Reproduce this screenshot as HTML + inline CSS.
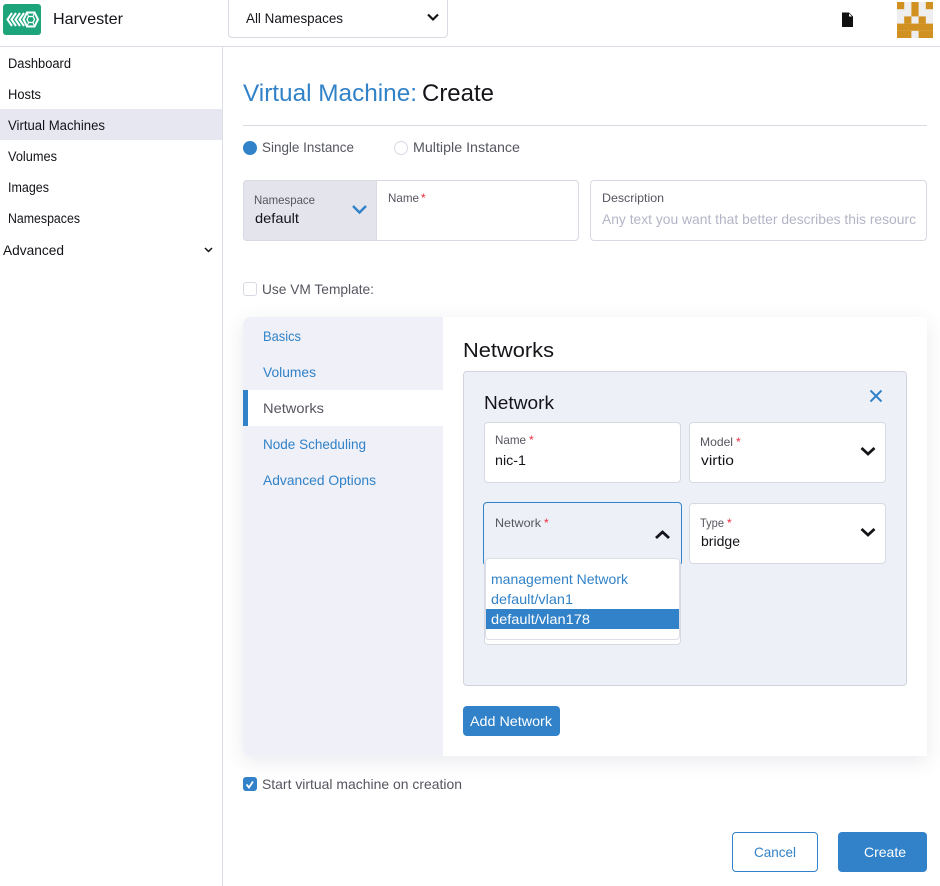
<!DOCTYPE html>
<html><head><meta charset="utf-8"><title>Harvester</title>
<style>
html,body{margin:0;padding:0;background:#fff}
#p{position:relative;width:940px;height:886px;overflow:hidden;background:#fff}
#p div{position:absolute;box-sizing:border-box}
.b{background:#fff;border:1px solid #d8dae3;border-radius:4px}
svg{position:absolute;left:0;top:0}
text{font-family:"Liberation Sans",sans-serif;font-size:14px;fill:#141419}
.g{fill:#55565f}.l{fill:#3182c8}.s{font-size:12px;fill:#55565f}.r{fill:#ee2b3b;font-size:12px}
</style></head><body><div id="p">
<div style="left:0;top:46px;width:940px;height:1px;background:#dcdee7"></div>
<div style="left:222px;top:47px;width:1px;height:839px;background:#dcdee7"></div>
<div style="left:0;top:109px;width:222px;height:31px;background:#e6e7f0"></div>
<div class="b" style="left:228px;top:-4px;width:220px;height:42px"></div>
<div style="left:3px;top:4px;width:38px;height:31px;background:#1ea47b;border-radius:3px"></div>
<div style="left:243px;top:125px;width:684px;height:1px;background:#d8dae3"></div>
<div style="left:243px;top:141px;width:14px;height:14px;border-radius:50%;background:#3182c8"></div>
<div style="left:394px;top:141px;width:14px;height:14px;border-radius:50%;border:1px solid #d8dae3"></div>
<div class="b" style="left:243px;top:180px;width:336px;height:61px"></div>
<div style="left:243px;top:180px;width:134px;height:61px;background:#e3e4ec;border:1px solid #d8dae3;border-radius:4px 0 0 4px"></div>
<div class="b" style="left:590px;top:180px;width:337px;height:61px"></div>
<div class="b" style="left:243px;top:282px;width:14px;height:14px;border-radius:3px"></div>
<div style="left:243px;top:317px;width:684px;height:439px;background:#fff;border-radius:8px 0 0 8px;box-shadow:0 5px 20px rgba(40,45,80,.1)"></div>
<div style="left:243px;top:317px;width:200px;height:439px;background:#eff0f8;border-radius:8px 0 0 8px"></div>
<div style="left:243px;top:390px;width:200px;height:36px;background:#fff"></div>
<div style="left:243px;top:390px;width:5px;height:36px;background:#3182c8"></div>
<div style="left:463px;top:371px;width:444px;height:315px;background:#eef0f8;border:1px solid #d2d4dd;border-radius:4px"></div>
<div class="b" style="left:484px;top:422px;width:197px;height:61px"></div>
<div class="b" style="left:689px;top:422px;width:197px;height:61px"></div>
<div class="b" style="left:689px;top:503px;width:197px;height:61px"></div>
<div style="left:483px;top:502px;width:199px;height:64px;background:#eef0f8;border:1px solid #3182c8;border-radius:4px"></div>
<div class="b" style="left:484px;top:560px;width:197px;height:85px"></div>
<div class="b" style="left:485px;top:558px;width:195px;height:82px;border-color:#dcdee7"></div>
<div style="left:486px;top:609px;width:193px;height:20px;background:#3182c8"></div>
<div style="left:463px;top:706px;width:97px;height:30px;background:#3182c8;border-radius:4px"></div>
<div style="left:243px;top:777px;width:14px;height:14px;background:#3182c8;border-radius:3px"></div>
<div style="left:732px;top:832px;width:86px;height:40px;background:#fff;border:1px solid #3182c8;border-radius:4px"></div>
<div style="left:838px;top:832px;width:89px;height:40px;background:#3182c8;border-radius:4px"></div>
<svg width="940" height="886" viewBox="0 0 940 886">
<g fill="none" stroke="#fff" stroke-width="2">
<path d="M12 13l-4.500 6.500 4.500 6.500M16 13l-4.500 6.500 4.500 6.500M20 13l-4.500 6.500 4.500 6.500M24 13l-4.500 6.500 4.500 6.500"/>
<path d="M27 12.500h7.500l3.500 7-3.500 7h-7.500l-3.500-7z"/><path d="M28.500 16.500h4.500l1.500 3-1.500 3h-4.500l-1.500-3z" stroke-width="1.300"/>
<path d="M27 12.500l1.500 4M34.500 12.500l-1.500 4M27 26.500l1.500-4M34.500 26.500l-1.500-4" stroke-width="1"/>
</g>
<rect x="897" y="2" width="36" height="36" fill="#eeeeee"/>
<g fill="#d09120">
<rect x="897" y="2" width="7.200" height="7.200"/><rect x="911.400" y="2" width="7.200" height="14.400"/><rect x="925.800" y="2" width="7.200" height="7.200"/>
<rect x="904.200" y="16.400" width="7.200" height="7.200"/><rect x="918.600" y="16.400" width="7.200" height="7.200"/>
<rect x="897" y="23.600" width="36" height="7.200"/><rect x="897" y="30.800" width="14.400" height="7.200"/><rect x="918.600" y="30.800" width="14.400" height="7.200"/>
</g>
<path d="M842 12.500h7l4 4v10.500h-11z" fill="#111"/><path d="M849 13.500l3 3h-3z" fill="#fff"/>
<g fill="none" stroke="#141419" stroke-width="2.800">
<path d="M428 14.500l5 5 5-5" stroke-width="2.200"/>
<path d="M861.500 448l6.500 6 6.500-6"/><path d="M861.500 529l6.500 6 6.500-6"/>
<path d="M656 538l6.500-6 6.500 6"/>
</g>
<path d="M205 248l3.500 3.500 3.500-3.500" fill="none" stroke="#141419" stroke-width="1.500"/>
<path d="M353 206l6.500 6.500 6.500-6.500" fill="none" stroke="#3182c8" stroke-width="2.400"/>
<path d="M870.500 390.500l11 11M881.500 390.500l-11 11" fill="none" stroke="#3182c8" stroke-width="2"/>
<path d="M246.500 784.500l2.500 3 4-6" fill="none" stroke="#fff" stroke-width="1.800"/>

<text x="53" y="24" style="font-size:16px" textLength="70" lengthAdjust="spacingAndGlyphs">Harvester</text>
<text x="246" y="23" textLength="97" lengthAdjust="spacingAndGlyphs">All Namespaces</text>
<text x="8" y="68" style="font-size:13.500px" textLength="63" lengthAdjust="spacingAndGlyphs">Dashboard</text>
<text x="8" y="99" style="font-size:13.500px" textLength="33" lengthAdjust="spacingAndGlyphs">Hosts</text>
<text x="8" y="130" style="font-size:13.500px" textLength="97" lengthAdjust="spacingAndGlyphs">Virtual Machines</text>
<text x="8" y="161" style="font-size:13.500px" textLength="49" lengthAdjust="spacingAndGlyphs">Volumes</text>
<text x="8" y="192" style="font-size:13.500px" textLength="41" lengthAdjust="spacingAndGlyphs">Images</text>
<text x="8" y="223" style="font-size:13.500px" textLength="72" lengthAdjust="spacingAndGlyphs">Namespaces</text>
<text x="3" y="255" textLength="61" lengthAdjust="spacingAndGlyphs">Advanced</text>
<text x="243" y="101" class="l" style="font-size:24px" textLength="174" lengthAdjust="spacingAndGlyphs">Virtual Machine:</text>
<text x="422" y="101" style="font-size:24px" textLength="72" lengthAdjust="spacingAndGlyphs">Create</text>
<text x="262" y="152" class="g" textLength="92" lengthAdjust="spacingAndGlyphs">Single Instance</text>
<text x="413" y="152" class="g" textLength="107" lengthAdjust="spacingAndGlyphs">Multiple Instance</text>
<text x="254" y="204" class="s" textLength="61" lengthAdjust="spacingAndGlyphs">Namespace</text>
<text x="255" y="223" textLength="44" lengthAdjust="spacingAndGlyphs">default</text>
<text x="388" y="202" class="s" textLength="31" lengthAdjust="spacingAndGlyphs">Name</text><text x="421" y="202" class="r">*</text>
<text x="602" y="202" class="s" textLength="62" lengthAdjust="spacingAndGlyphs">Description</text>
<text x="602" y="224" style="fill:#b3b5c6" textLength="314" lengthAdjust="spacingAndGlyphs">Any text you want that better describes this resourc</text>
<text x="262" y="294" class="g" textLength="112" lengthAdjust="spacingAndGlyphs">Use VM Template:</text>
<text x="263" y="341" class="l" textLength="38" lengthAdjust="spacingAndGlyphs">Basics</text>
<text x="263" y="377" class="l" textLength="53" lengthAdjust="spacingAndGlyphs">Volumes</text>
<text x="263" y="413" class="g" textLength="61" lengthAdjust="spacingAndGlyphs">Networks</text>
<text x="263" y="449" class="l" textLength="103" lengthAdjust="spacingAndGlyphs">Node Scheduling</text>
<text x="263" y="485" class="l" textLength="113" lengthAdjust="spacingAndGlyphs">Advanced Options</text>
<text x="463" y="357" style="font-size:20px" textLength="91" lengthAdjust="spacingAndGlyphs">Networks</text>
<text x="484" y="409" style="font-size:18px" textLength="70" lengthAdjust="spacingAndGlyphs">Network</text>
<text x="495" y="444" class="s" textLength="31" lengthAdjust="spacingAndGlyphs">Name</text><text x="529" y="444" class="r">*</text>
<text x="495" y="465" textLength="31" lengthAdjust="spacingAndGlyphs">nic-1</text>
<text x="700" y="446" class="s" textLength="33" lengthAdjust="spacingAndGlyphs">Model</text><text x="736" y="446" class="r">*</text>
<text x="701" y="465" textLength="33" lengthAdjust="spacingAndGlyphs">virtio</text>
<text x="495" y="527" class="s" textLength="46" lengthAdjust="spacingAndGlyphs">Network</text><text x="544" y="527" class="r">*</text>
<text x="700" y="527" class="s" textLength="24" lengthAdjust="spacingAndGlyphs">Type</text><text x="727" y="527" class="r">*</text>
<text x="701" y="546" textLength="39" lengthAdjust="spacingAndGlyphs">bridge</text>
<text x="491" y="584" class="l" textLength="137" lengthAdjust="spacingAndGlyphs">management Network</text>
<text x="491" y="604" class="l" textLength="82" lengthAdjust="spacingAndGlyphs">default/vlan1</text>
<text x="491" y="624" style="fill:#fff" textLength="99" lengthAdjust="spacingAndGlyphs">default/vlan178</text>
<text x="470" y="726" style="fill:#fff" textLength="82" lengthAdjust="spacingAndGlyphs">Add Network</text>
<text x="262" y="789" class="g" textLength="200" lengthAdjust="spacingAndGlyphs">Start virtual machine on creation</text>
<text x="754" y="857" class="l" textLength="42" lengthAdjust="spacingAndGlyphs">Cancel</text>
<text x="864" y="857" style="fill:#fff" textLength="42" lengthAdjust="spacingAndGlyphs">Create</text>
</svg>
</div></body></html>
